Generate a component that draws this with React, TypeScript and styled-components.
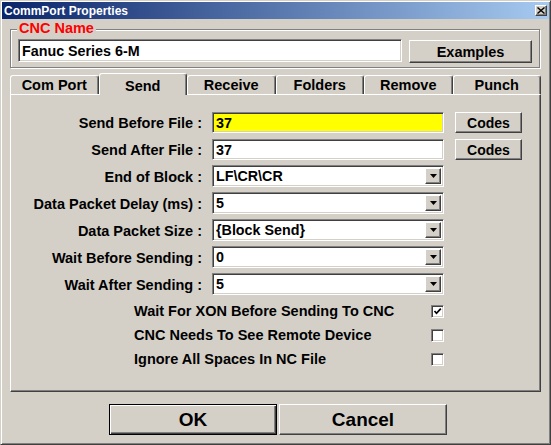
import styled, { createGlobalStyle } from 'styled-components';

const GlobalStyle = createGlobalStyle`
  html, body {
    margin: 0;
    padding: 0;
    background: #d4d0c8;
  }
  body {
    font-family: 'Liberation Sans', Arial, sans-serif;
  }
  * {
    box-sizing: border-box;
  }
`;

const rows = [
  { label: 'Send Before File :', value: '37', kind: 'text', highlight: true, codes: true },
  { label: 'Send After File :', value: '37', kind: 'text', codes: true },
  { label: 'End of Block :', value: 'LF\\CR\\CR', kind: 'combo' },
  { label: 'Data Packet Delay (ms) :', value: '5', kind: 'combo' },
  { label: 'Data Packet Size :', value: '{Block Send}', kind: 'combo' },
  { label: 'Wait Before Sending :', value: '0', kind: 'combo' },
  { label: 'Wait After Sending :', value: '5', kind: 'combo' },
];

const checks = [
  { label: 'Wait For XON Before Sending To CNC', checked: true },
  { label: 'CNC Needs To See Remote Device', checked: false },
  { label: 'Ignore All Spaces In NC File', checked: false },
];

const tabs = ['Com Port', 'Send', 'Receive', 'Folders', 'Remove', 'Punch'];

export default function App() {
  return (
    <>
      <GlobalStyle />
      <Window>
        <TitleBar>
          <TitleText>CommPort Properties</TitleText>
          <CloseButton>
            <svg width="8" height="7" viewBox="0 0 8 7">
              <path d="M0.5 0.5 L7.5 6.5 M7.5 0.5 L0.5 6.5" stroke="#000" strokeWidth="1.4" />
            </svg>
          </CloseButton>
        </TitleBar>

        <GroupBox>
          <Legend>CNC Name</Legend>
          <NameInput>Fanuc Series 6-M</NameInput>
          <ExamplesButton>Examples</ExamplesButton>
        </GroupBox>

        <TabStrip>
          {tabs.map((t) => (
            <Tab key={t} $active={t === 'Send'}>
              {t}
            </Tab>
          ))}
        </TabStrip>

        <Panel>
          <FieldGrid>
            {rows.map((r) => (
              <FieldRow key={r.label}>
                <FieldLabel>{r.label}</FieldLabel>
                {r.kind === 'text' ? (
                  <TextBox $highlight={r.highlight}>{r.value}</TextBox>
                ) : (
                  <Combo>
                    <ComboValue>{r.value}</ComboValue>
                    <DropButton>
                      <svg width="7" height="4" viewBox="0 0 7 4">
                        <polygon points="0,0 7,0 3.5,4" fill="#000" />
                      </svg>
                    </DropButton>
                  </Combo>
                )}
                {r.codes ? <CodesButton>Codes</CodesButton> : <span />}
              </FieldRow>
            ))}
          </FieldGrid>

          <CheckList>
            {checks.map((c) => (
              <CheckRow key={c.label}>
                <CheckLabel>{c.label}</CheckLabel>
                <CheckBox>
                  {c.checked && (
                    <svg width="9" height="9" viewBox="0 0 9 9">
                      <polyline points="1.5,4 3.5,6.3 7.8,1.6" fill="none" stroke="#000" strokeWidth="1.7" />
                    </svg>
                  )}
                </CheckBox>
              </CheckRow>
            ))}
          </CheckList>
        </Panel>

        <Footer>
          <DialogButton $default>OK</DialogButton>
          <DialogButton>Cancel</DialogButton>
        </Footer>
      </Window>
    </>
  );
}

const raised = `
  background: #d4d0c8;
  border: 1px solid;
  border-color: #ffffff #404040 #404040 #ffffff;
  box-shadow: inset -1px -1px #808080;
`;

const sunken = `
  border: 1px solid;
  border-color: #808080 #ffffff #ffffff #808080;
  box-shadow: inset 1px 1px #404040, inset -1px -1px #d4d0c8;
`;

const Window = styled.div`
  width: 551px;
  height: 445px;
  padding: 1px;
  display: flex;
  flex-direction: column;
  background: #d4d0c8;
  border: 1px solid;
  border-color: #d4d0c8 #404040 #404040 #d4d0c8;
  box-shadow: inset 1px 1px #ffffff, inset -1px -1px #808080;
`;

const TitleBar = styled.div`
  height: 17px;
  display: flex;
  align-items: center;
  justify-content: space-between;
  background: linear-gradient(to right, #0a246a, #a6caf0);
`;

const TitleText = styled.span`
  padding-left: 2px;
  color: #ffffff;
  font-size: 12px;
  font-weight: bold;
`;

const CloseButton = styled.div`
  ${raised}
  width: 12px;
  height: 11px;
  margin-right: 2px;
  display: flex;
  align-items: center;
  justify-content: center;
`;

const GroupBox = styled.div`
  position: relative;
  height: 39px;
  margin: 10px 9px 0 8px;
  padding: 9px 7px 0 7px;
  display: flex;
  align-items: flex-start;
  gap: 7px;
  border: 1px solid #808080;
  box-shadow: inset 1px 1px #ffffff, 1px 1px #ffffff;
`;

const Legend = styled.span`
  position: absolute;
  top: -10px;
  left: 6px;
  padding: 0 2px;
  background: #d4d0c8;
  color: #ff0000;
  font-size: 14.5px;
  font-weight: bold;
  line-height: 17px;
`;

const NameInput = styled.div`
  ${sunken}
  width: 384px;
  height: 23px;
  padding: 0 3px;
  display: flex;
  align-items: center;
  background: #ffffff;
  color: #000000;
  font-size: 14.3px;
  font-weight: bold;
`;

const ExamplesButton = styled.div`
  ${raised}
  width: 123px;
  height: 23px;
  margin-top: 1px;
  display: flex;
  align-items: center;
  justify-content: center;
  font-size: 14.5px;
  font-weight: bold;
`;

const TabStrip = styled.div`
  height: 22px;
  margin: 4px 8px 0 8px;
  display: flex;
  align-items: flex-end;
  position: relative;
  z-index: 1;
`;

const Tab = styled.div<{ $active?: boolean }>`
  flex: 1;
  height: ${({ $active }) => ($active ? '22px' : '19px')};
  margin-bottom: ${({ $active }) => ($active ? '-1px' : '0')};
  padding-top: ${({ $active }) => ($active ? '2px' : '0')};
  display: flex;
  align-items: center;
  justify-content: center;
  background: #d4d0c8;
  border-top: 1px solid #ffffff;
  border-left: 1px solid #ffffff;
  border-right: 1px solid #404040;
  border-radius: 3px 3px 0 0;
  box-shadow: inset -1px 0 #808080;
  font-size: 14.5px;
  font-weight: bold;
  color: #000000;
`;

const Panel = styled.div`
  height: 298px;
  margin: 0 8px;
  padding-top: 14px;
  border: 1px solid;
  border-color: #ffffff #404040 #404040 #ffffff;
  box-shadow: inset -1px -1px #808080;
`;

const FieldGrid = styled.div`
  display: flex;
  flex-direction: column;
`;

const FieldRow = styled.div`
  height: 27px;
  display: grid;
  grid-template-columns: 191px 232px 67px;
  column-gap: 10px;
  align-items: center;
  & > :nth-child(3) {
    margin-left: 1px;
  }
`;

const FieldLabel = styled.span`
  text-align: right;
  font-size: 14.5px;
  font-weight: bold;
  color: #000000;
  white-space: nowrap;
`;

const TextBox = styled.div<{ $highlight?: boolean }>`
  ${sunken}
  height: 21px;
  padding: 0 3px;
  display: flex;
  align-items: center;
  background: ${({ $highlight }) => ($highlight ? '#ffff00' : '#ffffff')};
  font-size: 14.3px;
  font-weight: bold;
`;

const Combo = styled.div`
  ${sunken}
  height: 22px;
  margin-top: -1px;
  padding: 2px;
  display: flex;
  align-items: stretch;
  background: #ffffff;
`;

const ComboValue = styled.span`
  flex: 1;
  padding-left: 1px;
  display: flex;
  align-items: center;
  font-size: 14.3px;
  font-weight: bold;
`;

const DropButton = styled.div`
  ${raised}
  width: 16px;
  display: flex;
  align-items: center;
  justify-content: center;
`;

const CodesButton = styled.div`
  ${raised}
  width: 67px;
  height: 21px;
  display: flex;
  align-items: center;
  justify-content: center;
  font-size: 14px;
  font-weight: bold;
`;

const CheckList = styled.div`
  margin-top: 1px;
  display: flex;
  flex-direction: column;
`;

const CheckRow = styled.div`
  height: 24px;
  padding-left: 123px;
  display: grid;
  grid-template-columns: 297px 13px;
  align-items: center;
`;

const CheckLabel = styled.span`
  font-size: 14.5px;
  font-weight: bold;
  white-space: nowrap;
`;

const CheckBox = styled.div`
  ${sunken}
  width: 13px;
  height: 13px;
  display: flex;
  align-items: center;
  justify-content: center;
  background: #ffffff;
`;

const Footer = styled.div`
  margin-top: 12px;
  padding-left: 107px;
  display: flex;
  gap: 2px;
`;

const DialogButton = styled.div<{ $default?: boolean }>`
  width: 168px;
  height: 31px;
  display: flex;
  align-items: center;
  justify-content: center;
  background: #d4d0c8;
  border: 1px solid;
  border-color: ${({ $default }) =>
    $default ? '#000000' : '#ffffff #404040 #404040 #ffffff'};
  box-shadow: ${({ $default }) =>
    $default
      ? 'inset 1px 1px #ffffff, inset -1px -1px #404040, inset -2px -2px #808080'
      : 'inset -1px -1px #808080'};
  font-size: 19px;
  font-weight: bold;
  color: #000000;
`;
